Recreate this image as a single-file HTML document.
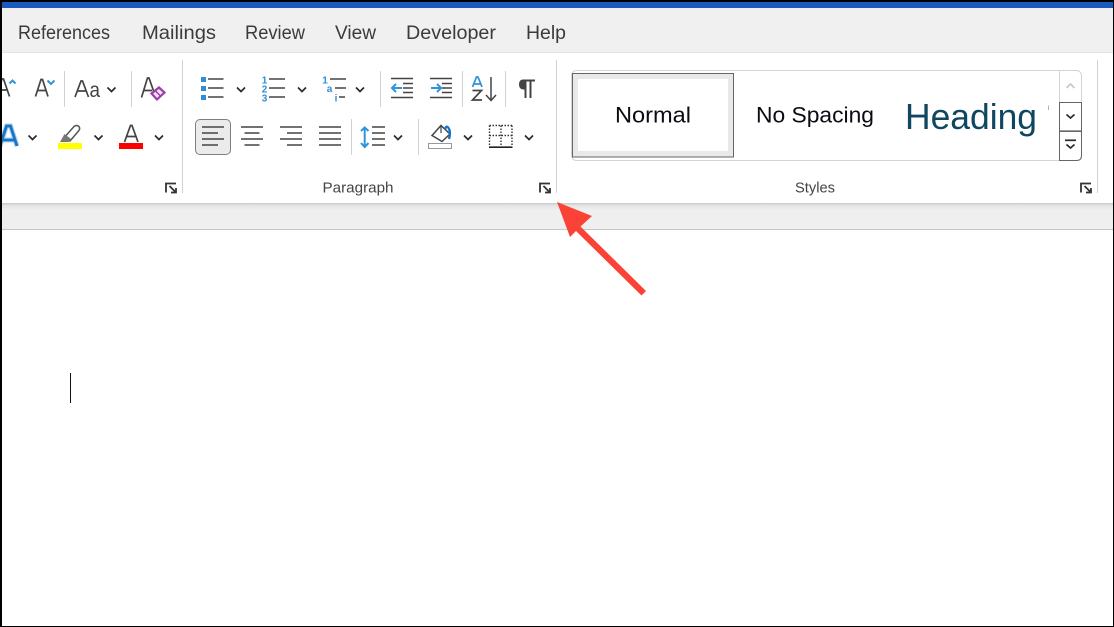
<!DOCTYPE html>
<html lang="en"><head><meta charset="utf-8"><title>Word ribbon</title>
<style>
html,body{margin:0;padding:0;background:#fff;width:1114px;height:627px;overflow:hidden}
svg{display:block;position:absolute;left:0;top:0}
text{font-family:"Liberation Sans",sans-serif}
</style></head><body>
<svg width="1114" height="627" viewBox="0 0 1114 627" xmlns="http://www.w3.org/2000/svg">
<defs>
<linearGradient id="sh" x1="0" y1="0" x2="0" y2="1"><stop offset="0" stop-color="#c9c9c9"/><stop offset="0.35" stop-color="#e4e4e4"/><stop offset="1" stop-color="#efefef"/></linearGradient>
</defs>
<rect width="1114" height="627" fill="#fff"/>
<rect x="0" y="8" width="1114" height="44" fill="#f0f0f0"/>
<rect x="0" y="52" width="1114" height="1" fill="#e3e3e3"/>
<rect x="0" y="2" width="1114" height="6" fill="#185abd"/>
<rect x="0" y="203" width="1114" height="26" fill="#efefef"/>
<rect x="0" y="203" width="1114" height="7" fill="url(#sh)"/>
<rect x="0" y="229" width="1114" height="1" fill="#c6c6c6"/>

<g font-size="19.500" fill="#3b3b3b">
<text x="18" y="39" textLength="92" lengthAdjust="spacingAndGlyphs">References</text>
<text x="142" y="39" textLength="74" lengthAdjust="spacingAndGlyphs">Mailings</text>
<text x="245" y="39" textLength="60" lengthAdjust="spacingAndGlyphs">Review</text>
<text x="335" y="39" textLength="41" lengthAdjust="spacingAndGlyphs">View</text>
<text x="406" y="39" textLength="90" lengthAdjust="spacingAndGlyphs">Developer</text>
<text x="526" y="39" textLength="40" lengthAdjust="spacingAndGlyphs">Help</text>
</g>

<!-- separators -->
<g stroke="#d2d2d2" stroke-width="1" fill="none">
<path d="M182.500 60V193M556.500 60V193M1097.500 60V193"/>
<path d="M64.500 71V107M131.500 71V107M380.500 71V107M462.500 71V107M505.500 71V107"/>
<path d="M351.500 119V155M418.500 119V155"/>
</g>

<!-- font group row 1 -->
<g fill="none" stroke="#444" stroke-width="1.700">
<path d="M-4 96.500L2 79H3.500L9.500 96.500M-1 90H8"/>
<path d="M35.500 96.500L41 79.500H42.500L48 96.500M38 90.500H45.500"/>
<path d="M75 97L81 81H82.500L88.500 97M77.500 91H86"/>
<path d="M141.500 97.500L147.500 78H149L155 95M144 90.500H152"/>
</g>
<path d="M9.500 83.500L12.500 80.500L15.500 83.500M47.500 80.500L51 84L54.500 80.500" fill="none" stroke="#2f94d9" stroke-width="2"/>
<text x="89.500" y="97" font-size="21.500" fill="#444" textLength="10.500" lengthAdjust="spacingAndGlyphs">a</text>
<path d="M151.500 93.500L159 87.500L164.500 92.500L157 99.500Z" fill="#f3e3f4" stroke="#9b3fa6" stroke-width="2.200"/>
<path d="M155 90.500L161 96.500" stroke="#9b3fa6" stroke-width="1.500"/>

<!-- chevrons -->
<g fill="none" stroke="#2b2b2b" stroke-width="1.700">
<path d="M107.500 87.500L111.500 91.500L115.500 87.500"/>
<path d="M237 87.500L241 91.500L245 87.500"/>
<path d="M298 87.500L302 91.500L306 87.500"/>
<path d="M356 87.500L360 91.500L364 87.500"/>
<path d="M28.500 135.500L32.500 139.500L36.500 135.500"/>
<path d="M94.500 135.500L98.500 139.500L102.500 135.500"/>
<path d="M155 135.500L159 139.500L163 135.500"/>
<path d="M394 135.500L398 139.500L402 135.500"/>
<path d="M464 135.500L468 139.500L472 135.500"/>
<path d="M525 135.500L529 139.500L533 135.500"/>
</g>

<!-- text effects A -->
<path d="M0 146L6.500 126H10.500L17 146M2 140H15" fill="none" stroke="#a9d2f0" stroke-width="5"/>
<path d="M0 146L6.500 126H10.500L17 146M2 140H15" fill="none" stroke="#1a74c4" stroke-width="2.800"/>
<path d="M6 137.500L8.500 130L11 137.500Z" fill="#fff"/>

<!-- highlighter -->
<path d="M63 139L74 126.500Q76.500 124.500 79 126.500Q80.500 129 78.500 131L70 141Z" fill="#fff" stroke="#555" stroke-width="1.500"/>
<path d="M60 142L64.500 134L71 139L69 142Z" fill="#777"/>
<rect x="58" y="143" width="24" height="6" fill="#ffff00"/>
<!-- font colour -->
<path d="M124.500 142L130.500 125.500H132L138 142M127 136.500H135.500" fill="none" stroke="#444" stroke-width="1.700"/>
<rect x="119" y="143" width="24" height="6" fill="#ff0000"/>

<!-- launchers -->
<g fill="none" stroke="#333" stroke-width="1.800">
<path d="M166 192.500V183.500H176M169.500 186L175.500 192M176 188V192.500H171"/>
<path d="M540 192.500V183.500H550M543.500 186L549.500 192M550 188V192.500H545"/>
<path d="M1081 192.500V183.500H1091M1084.500 186L1090.500 192M1091 188V192.500H1086"/>
</g>

<!-- lists -->
<g fill="#2f8fd6">
<rect x="201" y="77" width="5" height="5"/><rect x="201" y="86" width="5" height="5"/><rect x="201" y="95" width="5" height="5"/>
</g>
<g stroke="#444" stroke-width="1.600" fill="none">
<path d="M208 79H223.500M208 88H223.500M208 97H223.500"/>
<path d="M269 79H285M269 88H285M269 97H285"/>
<path d="M330 79H346M335 88H346M339 97H345"/>
</g>
<g font-size="10" font-weight="bold" fill="#2f8fd6" text-anchor="middle">
<text x="264.500" y="83.500">1</text><text x="264.500" y="92.500">2</text><text x="264.500" y="101.500">3</text>
<text x="325" y="83.500">1</text><text x="329.500" y="92">a</text><text x="336" y="101.500">i</text>
</g>

<!-- indents -->
<g stroke="#444" stroke-width="1.600" fill="none">
<path d="M391 78.500H413M403 83.500H413M403 88H413M403 92.500H413M391 97.500H413"/>
<path d="M430 78.500H452M442 83.500H452M442 88H452M442 92.500H452M430 97.500H452"/>
</g>
<g stroke="#2f94d9" stroke-width="2" fill="none">
<path d="M392 88H402M396 84L392 88L396 92"/>
<path d="M431 88H441M437 84L441 88L437 92"/>
</g>

<!-- sort -->
<path d="M472.500 87L476.500 77H478L482 87M474 84H480.500" fill="none" stroke="#2f94d9" stroke-width="1.700"/>
<path d="M472.500 90.500H481.500L472.500 100H482" fill="none" stroke="#444" stroke-width="1.700"/>
<path d="M491 77V100M486 95L491 100.500L496 95" fill="none" stroke="#444" stroke-width="1.500"/>

<!-- pilcrow -->
<path d="M528 79.500H522.500Q519 80 519 84.500Q519 89 523 89.500H524.500V98H526.500V81.500H529.500V98H531.500V81.500H535V79.500Z" fill="#444"/>

<!-- align -->
<rect x="195.500" y="119.500" width="35" height="35" rx="4.500" fill="#ebebeb" stroke="#7f7f7f" stroke-width="1"/>
<g stroke="#444" stroke-width="1.600" fill="none">
<path d="M202 127H224M202 133H218M202 139H224M202 145H218"/>
<path d="M241 127H263M244.500 133H259.500M241 139H263M244.500 145H259.500"/>
<path d="M280 127H302M287 133H302M280 139H302M287 145H302"/>
<path d="M319 127H341M319 133H341M319 139H341M319 145H341"/>
<path d="M372 127H385M372 133H385M372 139H385M372 145H385"/>
</g>
<path d="M364.700 128V146.500M361 131L364.700 127.500L368.500 131M361 143L364.700 147L368.500 143" fill="none" stroke="#2f94d9" stroke-width="2"/>

<!-- shading -->
<path d="M432 135.500L441 125.500L450 134L442 141.500Z" fill="#fff" stroke="#444" stroke-width="1.500"/>
<path d="M441 125.500V133" stroke="#444" stroke-width="1.200"/>
<path d="M445 129Q447 124 449.500 130Q450.500 134 449 139" fill="none" stroke="#1a74c4" stroke-width="2.400"/>
<rect x="428.500" y="143.500" width="23" height="5" fill="#fff" stroke="#999" stroke-width="1"/>

<!-- borders -->
<g fill="none" stroke="#333" stroke-width="1.400" stroke-dasharray="1.500 1.500">
<path d="M489.500 125.500H512M489.500 125.500V146M512 125.500V146M501 125.500V146M489.500 135.500H512"/>
</g>
<path d="M489 147.200H512.500" stroke="#222" stroke-width="1.600"/>

<!-- labels -->
<text x="358" y="192.500" font-size="14.500" fill="#454545" text-anchor="middle" textLength="71" lengthAdjust="spacingAndGlyphs">Paragraph</text>
<text x="815" y="192.500" font-size="14.500" fill="#454545" text-anchor="middle" textLength="40" lengthAdjust="spacingAndGlyphs">Styles</text>

<!-- styles gallery -->
<rect x="571.500" y="70.500" width="510" height="90" rx="5" fill="#fff" stroke="#d4d4d4" stroke-width="1"/>
<rect x="572.500" y="73.500" width="161" height="83.500" fill="#e9e9e9" stroke="#666" stroke-width="1"/>
<rect x="578" y="79" width="150" height="72" fill="#fff"/>
<text x="615" y="122.500" font-size="22" fill="#0b0b14" textLength="76" lengthAdjust="spacingAndGlyphs">Normal</text>
<text x="756" y="122.500" font-size="22" fill="#0b0b14" textLength="118" lengthAdjust="spacingAndGlyphs">No Spacing</text>
<text x="905" y="129" font-size="36" fill="#0f4761" textLength="132" lengthAdjust="spacingAndGlyphs">Heading</text>
<path d="M1048.500 105.500V110" stroke="#9fb8c4" stroke-width="1"/>

<path d="M1059.500 70.500V102" stroke="#d4d4d4" stroke-width="1"/>
<path d="M1066.500 88L1070.500 84L1074.500 88" fill="none" stroke="#c8c8c8" stroke-width="1.700"/>
<path d="M1059.500 102.500H1081.500V131H1059.500Z" fill="#fff" stroke="#666" stroke-width="1"/>
<path d="M1059.500 131.500H1081.500V155.500Q1081.500 160.500 1076.500 160.500H1059.500Z" fill="#fff" stroke="#666" stroke-width="1"/>
<path d="M1059 131.200H1082" stroke="#666" stroke-width="1.700"/>
<path d="M1066.500 114.500L1070.500 118L1074.500 114.500M1066.500 144.500L1070.500 148L1074.500 144.500" fill="none" stroke="#2b2b2b" stroke-width="1.700"/>
<path d="M1065 140.300H1076" stroke="#2b2b2b" stroke-width="1.700"/>

<!-- text cursor -->
<rect x="70" y="373" width="1" height="30" fill="#111"/>

<!-- arrow -->
<path d="M557 202L592 216L580.500 226.500L646 291L641.500 295.500L576 231L570 237Z" fill="#fb4236"/>

<!-- frame -->
<rect x="0" y="0" width="1114" height="2" fill="#000"/>
<rect x="0" y="0" width="2" height="627" fill="#000"/>
<rect x="1113" y="0" width="1" height="627" fill="#000"/>
<rect x="0" y="626" width="1114" height="1" fill="#000"/>
</svg>
</body></html>
